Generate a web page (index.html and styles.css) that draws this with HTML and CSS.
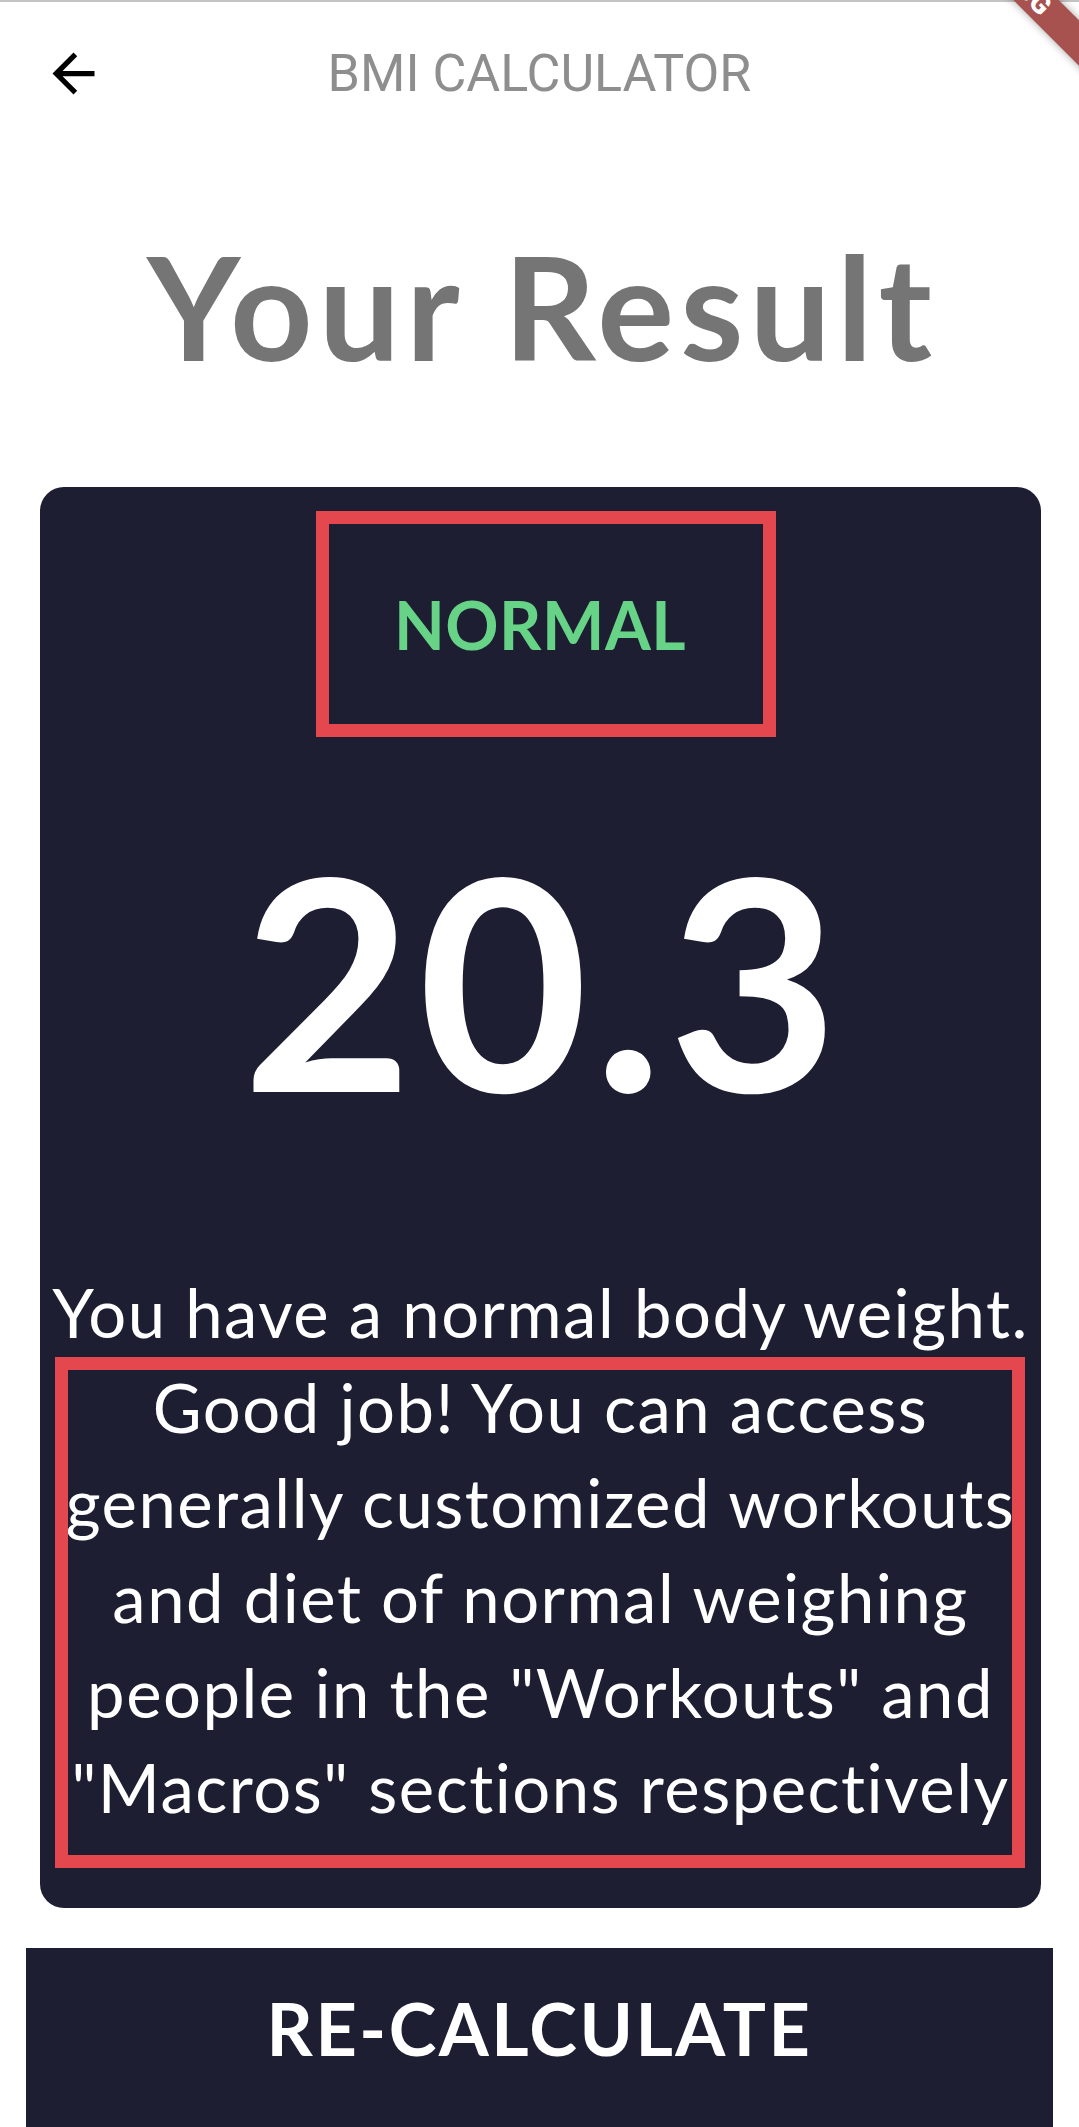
FILE: index.html
```html
<!DOCTYPE html>
<html lang="en">
<head>
<meta charset="utf-8">
<title>BMI Calculator</title>
<link rel="stylesheet" href="styles.css">
</head>
<body>
<div class="topline"></div>
<header class="appbar">
  <button class="back" aria-label="Back">
    <svg viewBox="0 0 24 24" width="63" height="63"><path d="M20 11H7.83l5.59-5.59L12 4l-8 8 8 8 1.41-1.41L7.83 13H20v-2z" fill="#000"/></svg>
  </button>
  <h1 class="title">BMI CALCULATOR</h1>
</header>
<main class="page">
  <h2 class="heading">Your Result</h2>
  <section class="card">
    <div class="status-box"><span class="status">NORMAL</span></div>
    <div class="bmi">20.3</div>
    <div class="desc-wrap">
      <p class="desc">You have a normal body weight.<br>Good job! You can access<br>generally customized workouts<br>and diet of normal weighing<br>people in the "Workouts" and<br>"Macros" sections respectively</p>
      <div class="highlight"></div>
    </div>
  </section>
  <button class="recalc">RE-CALCULATE</button>
</main>
<div class="banner"><span>DEBUG</span></div>
</body>
</html>
```

FILE: styles.css
```css
* { box-sizing: border-box; }
html, body { margin: 0; padding: 0; }
body {
  width: 1079px;
  height: 2127px;
  overflow: hidden;
  background: #ffffff;
  font-family: "Lato", "Open Sans", sans-serif;
  position: relative;
}
.topline {
  height: 2px;
  background: #c4c4c4;
  margin-bottom: -2px;
  position: relative;
  z-index: 2;
}
.appbar {
  height: 147px;
  display: flex;
  align-items: center;
  position: relative;
}
.back {
  width: 147px;
  height: 147px;
  border: 0;
  background: transparent;
  padding: 0;
  display: flex;
  align-items: center;
  justify-content: center;
}
.back svg { display: block; }
.title {
  position: absolute;
  left: 0;
  right: 0;
  top: 0;
  bottom: 0;
  margin: 0;
  display: flex;
  align-items: center;
  justify-content: center;
  font-family: "Roboto", sans-serif;
  font-weight: 400;
  font-size: 52px;
  color: #8e8e8e;
  pointer-events: none;
}
.page {
  display: flex;
  flex-direction: column;
}
.heading {
  margin: 87px 0 0;
  height: 144px;
  line-height: 144px;
  font-size: 144px;
  font-weight: 700;
  color: #757575;
  text-align: center;
  letter-spacing: 6px;
  padding-left: 6px;
}
.card {
  margin: 109px 38px 0 40px;
  height: 1421px;
  background: #1e1e33;
  border-radius: 24px;
  padding: 24px 0 0;
  display: flex;
  flex-direction: column;
}
.status-box {
  width: 460px;
  height: 226px;
  margin-left: 276px;
  border: 13px solid #e5474f;
  padding-right: 12px;
  display: flex;
  align-items: center;
  justify-content: center;
}
.status {
  font-size: 66px;
  font-weight: 700;
  color: #66d386;
  letter-spacing: 0.5px;
}
.bmi {
  margin-top: 92px;
  height: 300px;
  line-height: 300px;
  font-size: 294px;
  font-weight: 700;
  color: #ffffff;
  text-align: center;
  letter-spacing: 5px;
  padding-left: 5px;
}
.desc-wrap {
  position: relative;
  margin-top: 136px;
}
.desc {
  margin: 0;
  font-size: 67px;
  line-height: 95px;
  letter-spacing: 1.5px;
  color: #ffffff;
  text-align: center;
  white-space: nowrap;
}
.highlight {
  position: absolute;
  left: 15px;
  right: 16px;
  top: 92px;
  height: 511px;
  border: 13px solid #e5474f;
  pointer-events: none;
}
.recalc {
  margin: 40px 26px 0;
  height: 179px;
  border: 0;
  background: #1e1e33;
  color: #ffffff;
  font-family: "Lato", "Open Sans", sans-serif;
  font-weight: 700;
  font-size: 72px;
  letter-spacing: 2.5px;
  padding: 0 0 20px;
  display: flex;
  align-items: center;
  justify-content: center;
}
.banner {
  position: absolute;
  left: 866px;
  top: -36px;
  width: 300px;
  height: 32px;
  background: #a8524f;
  transform: rotate(45deg);
  box-shadow: 0 0 8px rgba(0, 0, 0, 0.35);
  display: flex;
  align-items: center;
  justify-content: center;
  z-index: 3;
}
.banner span {
  font-family: "Roboto", sans-serif;
  font-weight: 900;
  font-size: 27px;
  line-height: 27px;
  color: #ffffff;
}
```
